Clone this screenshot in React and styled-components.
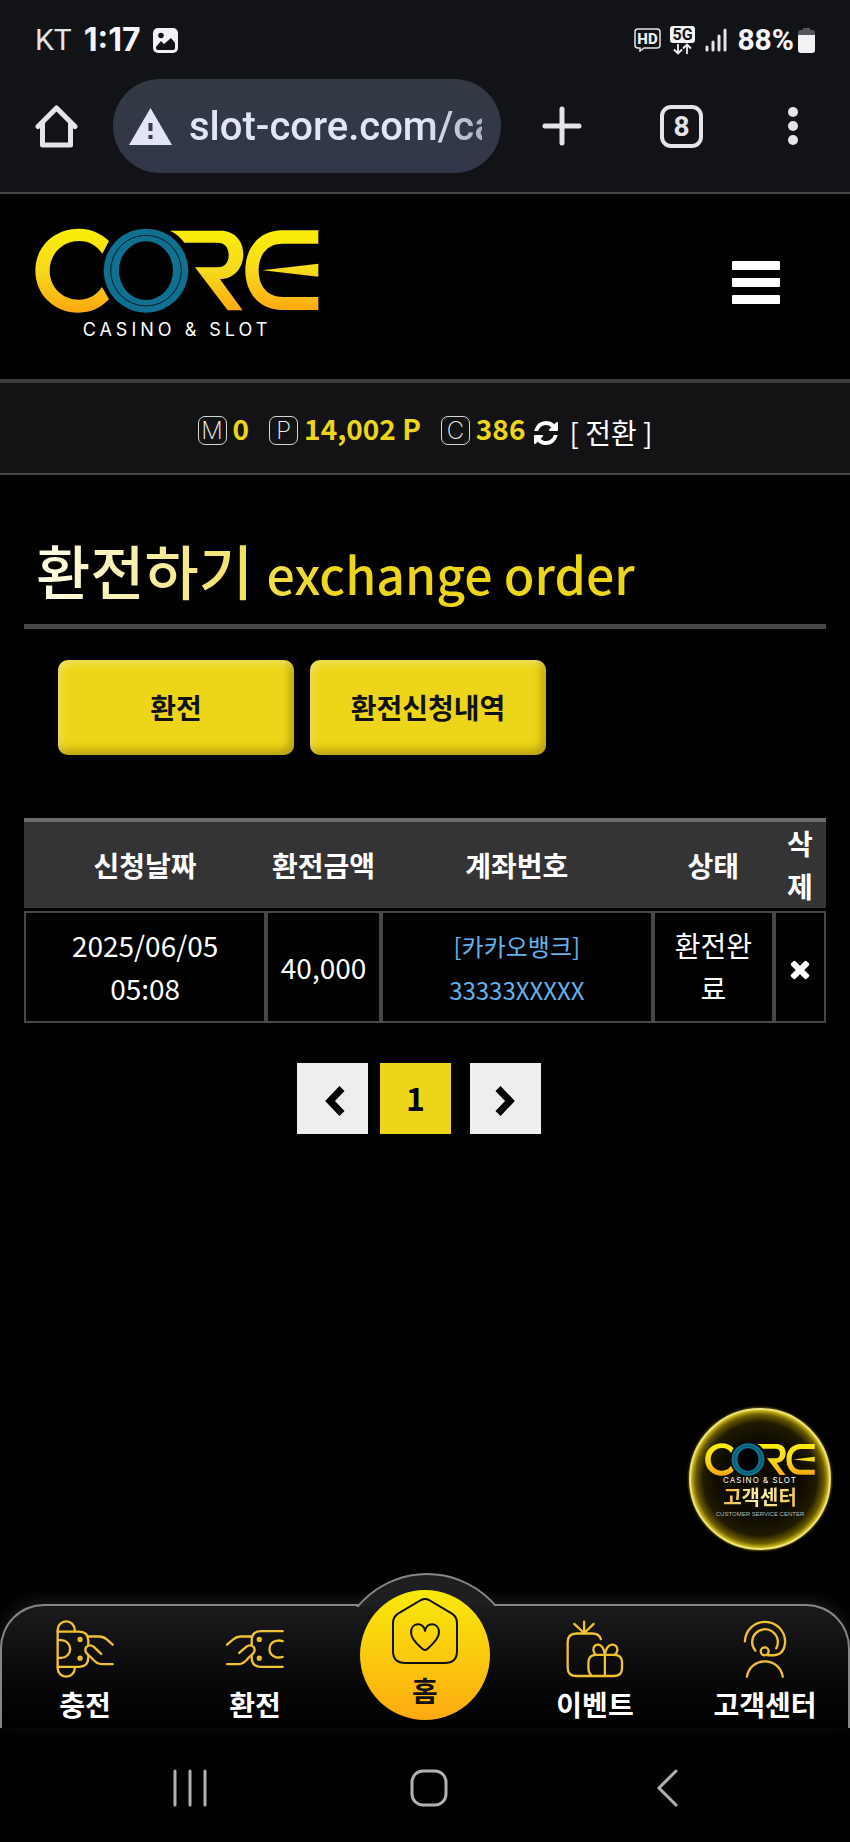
import React from "react";
import styled, {createGlobalStyle} from "styled-components";

const colors = {
    yellow: '#edd619',
    line: '#474747',
    chrome: '#111317',
    icon: '#e4e4e9',
    system: '#b5b0b3',
}

const GlobalStyle = createGlobalStyle`
  * {
    box-sizing: border-box;
  }

  body {
    margin: 0;
    background: #010102;
    color: #fff;
    font-family: "Noto Sans CJK KR", "Noto Sans", sans-serif;
    font-size: 28px;
    line-height: 43px;
  }

  button, input {
    font: inherit;
    border: 0;
    padding: 0;
    margin: 0;
    background: none;
    color: inherit;
  }

  button {
    cursor: pointer;
  }

  a {
    color: inherit;
    text-decoration: none;
  }

  svg {
    display: block;
    flex: none;
  }
`;

const Page = styled.div`
  display: flex;
  flex-direction: column;
  min-height: 100vh;
`;

/* phone status bar and browser bar */

const Chrome = styled.div`
  background: ${colors.chrome};
  border-bottom: 2px solid ${colors.line};
  color: ${colors.icon};
  font-family: Roboto, "Noto Sans", sans-serif;
`;

const StatusBar = styled.div`
  display: flex;
  justify-content: space-between;
  padding: 19px 35px 0 35px;
  height: 79px;
  line-height: 42px;
`;

const StatusGroup = styled.div`
  display: flex;
  align-items: center;
  gap: ${props => props.$gap}px;
  height: 42px;
`;

const Carrier = styled.span`
  font-size: 30px;
  font-weight: 400;
`;

const Clock = styled.span`
  font-family: Inter, sans-serif;
  font-size: 32px;
  font-weight: 700;
  color: #f5f5f8;
`;

const Battery = styled.span`
  display: flex;
  align-items: center;
  gap: 4px;
  font-size: 30px;
  font-weight: 700;
  color: #f5f5f8;
`;

const BrowserBar = styled.div`
  display: flex;
  align-items: center;
  height: 113px;
  padding: 0 45px 19px 35px;
`;

const AddressBar = styled.label`
  display: flex;
  align-items: center;
  flex: 1;
  min-width: 0;
  height: 94px;
  margin-left: 35px;
  padding: 0 19px 0 16px;
  gap: 17px;
  border-radius: 47px;
  background: linear-gradient(#333a43, #32364a);
`;

const Address = styled.input`
  flex: 1;
  min-width: 0;
  height: 60px;
  outline: none;
  font-size: 40px;
  font-weight: 500;
  color: #e2e5f5;
  -webkit-mask-image: linear-gradient(90deg, #000 80%, rgba(0, 0, 0, 0.7));
  mask-image: linear-gradient(90deg, #000 80%, rgba(0, 0, 0, 0.7));
`;

const BrowserActions = styled.div`
  display: flex;
  justify-content: space-between;
  width: 263px;
  margin-left: 41px;
`;

const TabCount = styled.button`
  width: 43px;
  height: 43px;
  border: 4px solid ${colors.icon};
  border-radius: 11px;
  font-size: 28px;
  font-weight: 700;
  line-height: 35px;
`;

const IconButton = styled.button`
  display: flex;
  align-items: center;
  justify-content: center;
`;

/* site header */

const Header = styled.header`
  display: flex;
  justify-content: space-between;
  align-items: center;
  height: 185px;
  padding: 0 70px 4px 35px;
`;

const Logo = styled.a`
  display: flex;
  flex-direction: column;
  align-items: center;
`;

const Tagline = styled.span`
  margin-top: ${props => props.$small ? 0 : 5}px;
  font-family: Inter, sans-serif;
  font-size: ${props => props.$small ? 8 : 18}px;
  line-height: ${props => props.$small ? 8 : 22}px;
  letter-spacing: ${props => props.$small ? 1 : 4}px;
  white-space: nowrap;
`;

const Menu = styled.button`
  display: flex;
  flex-direction: column;
  gap: 8px;
  padding-bottom: 4px;
`;

const MenuLine = styled.span`
  width: 48px;
  height: 9px;
  border-radius: 1px;
  background: #fff;
`;

const Wallet = styled.div`
  display: flex;
  justify-content: center;
  align-items: center;
  height: 96px;
  background: #131214;
  border-top: 4px solid #3d3d3f;
  border-bottom: 2px solid ${colors.line};
`;

const Balance = styled.span`
  display: flex;
  align-items: center;
  gap: 6px;
  margin-right: ${props => props.$last ? 8 : 20}px;
  font-weight: 700;
  color: ${colors.yellow};
`;

const Coin = styled.i`
  width: 29px;
  height: 29px;
  margin-top: 4px;
  border: 1px solid #d8d8d8;
  border-radius: 7px;
  font-family: Inter, sans-serif;
  font-style: normal;
  font-size: 24px;
  font-weight: 200;
  line-height: 27px;
  text-align: center;
  color: #f0f0f0;
`;

const Convert = styled.button`
  display: flex;
  align-items: center;
  gap: 10px;
  padding-top: 8px;
`;

/* page content */

const Main = styled.main`
  position: relative;
  flex: 1;
  padding: 56px 24px 0;
`;

const Title = styled.h1`
  margin: 0;
  height: 98px;
  border-bottom: 5px solid ${colors.line};
  padding-left: 12px;
  font-size: 59px;
  font-weight: 500;
  line-height: 78px;
`;

const TitleText = styled.span`
  background: linear-gradient(90deg, #fffde8, #f4e680 28%, ${colors.yellow} 50%);
  -webkit-background-clip: text;
  background-clip: text;
  color: transparent;
`;

const TitleSub = styled.span`
  font-size: 50px;
`;

const Tabs = styled.div`
  display: flex;
  gap: 16px;
  padding: 31px 34px 63px;
`;

const Tab = styled.button`
  width: 236px;
  height: 95px;
  border-radius: 10px;
  background: ${colors.yellow};
  box-shadow: inset 3px 4px 7px rgba(255, 255, 255, 0.3), inset -4px -5px 8px rgba(120, 90, 0, 0.45);
  color: #111;
  font-weight: 700;
`;

const Table = styled.table`
  width: 100%;
  table-layout: fixed;
  border-collapse: separate;
  border-spacing: 0;
  text-align: center;
`;

const Col = styled.col`
  width: ${props => props.$width};
`;

const HeadCell = styled.th`
  height: 92px;
  padding: 0 4px;
  border-top: 4px solid #6a6a6a;
  border-bottom: 3px solid #000;
  background: #343335;
  background-clip: padding-box;
  font-weight: 700;
  word-break: break-all;
`;

const Cell = styled.td`
  height: 112px;
  padding: 0 10px;
  border: 2px solid ${colors.line};
  word-break: break-all;
`;

const DateText = styled.span`
  word-break: normal;
`;

const Account = styled.a`
  font-size: 24px;
  color: #64b2ec;
`;

const Pages = styled.nav`
  display: flex;
  justify-content: center;
  padding: 40px 0 0;
  margin-right: 12px;
`;

const PageButton = styled.button`
  display: flex;
  align-items: center;
  justify-content: center;
  width: 71px;
  height: 71px;
  margin-right: ${props => props.$current ? 19 : 12}px;
  padding-bottom: ${props => props.$current ? 2 : 0}px;
  background: ${props => props.$current ? colors.yellow : '#eeeef0'};
  color: #000;
  font-size: 32px;
  font-weight: 700;

  &:last-child {
    margin-right: 0;
  }
`;

const Support = styled.a`
  position: absolute;
  right: 19px;
  bottom: 54px;
  display: flex;
  flex-direction: column;
  align-items: center;
  width: 142px;
  height: 142px;
  padding-top: 33px;
  border: 2px solid #eee27a;
  border-radius: 50%;
  background: radial-gradient(circle, #0d0a00 40%, #1f1a00 58%, #6b5c00 66%, #d9c51f 71%);
  box-shadow: 0 0 3px #b9a71c;
`;

const SupportName = styled.strong`
  font-size: 20px;
  font-weight: 700;
  line-height: 26px;
  background: linear-gradient(110deg, #ecae35, #fff3b0 50%, #ecc235);
  -webkit-background-clip: text;
  background-clip: text;
  color: transparent;
`;

const SupportNote = styled.small`
  font-family: "Liberation Sans", sans-serif;
  font-size: 6px;
  line-height: 8px;
  color: #b9b7ae;
`;

/* bottom bar */

const BottomBar = styled.nav`
  position: relative;
  display: grid;
  grid-template-columns: repeat(5, 1fr);
  height: 124px;
  border-radius: 44px 44px 0 0;
  background: linear-gradient(#1b1a1c, #050405 75%, #010102);
  box-shadow: 0 -4px 16px rgba(255, 255, 255, 0.1);
  font-weight: 700;

  &::before {
    content: "";
    position: absolute;
    inset: 0;
    border: 2px solid #868686;
    border-bottom: 0;
    border-radius: 44px 44px 0 0;
    pointer-events: none;
  }
`;

const Bump = styled.div`
  position: absolute;
  left: 50%;
  top: -31px;
  width: 140px;
  height: 34px;
  margin-left: -70px;
  overflow: hidden;

  &::before {
    content: "";
    position: absolute;
    left: -19px;
    top: 0;
    width: 178px;
    height: 178px;
    border: 2px solid #868686;
    border-radius: 50%;
    background: #1f1e20;
  }
`;

const BottomLink = styled.a`
  display: flex;
  flex-direction: column;
  align-items: center;
  gap: 5px;
  padding-top: 16px;
  color: #fff;
`;

const HomeLink = styled.a`
  position: relative;
  justify-self: center;
  display: flex;
  flex-direction: column;
  align-items: center;
  gap: 5px;
  width: 130px;
  height: 130px;
  margin-top: -14px;
  padding-top: 8px;
  border-radius: 50%;
  background: linear-gradient(#f7ea0b, #fdaa10);
  color: #111;
`;

const SystemBar = styled.div`
  display: flex;
  justify-content: space-between;
  align-items: center;
  height: 114px;
  padding: 6px 164px 0 171px;
`;

function CoreMark({width, id}) {
    return (
        <svg width={width} viewBox="105 88 852 256" aria-label="CORE">
            <defs>
                <linearGradient id={id} x1="0" y1="90" x2="0" y2="342" gradientUnits="userSpaceOnUse">
                    <stop offset="0" stopColor="#fbee08"/>
                    <stop offset="0.5" stopColor="#f6da1c"/>
                    <stop offset="1" stopColor="#ffa70f"/>
                </linearGradient>
            </defs>
            <g fill={`url(#${id})`}>
                <path d="M327 127C302 103 272 90 236 90C162 90 106 145 106 216C106 287 162 342 236 342C272 342 302 328 327 302L306 265C289 290 265 303 238 303C188 303 149 266 149 216C149 165 188 127 238 127C266 127 290 140 307 165Z"/>
                <path d="M510 96H662C702 96 730 125 730 166C730 207 704 240 660 242L728 335H683L585 206H652C674 206 686 192 686 169C686 146 674 132 652 132H553C543 117 528 104 510 96Z"/>
                <path d="M955 95H846C780 95 736 145 736 215C736 285 780 334 846 334H955V295H848C803 295 776 263 776 215C776 167 803 135 848 135H955Z"/>
                <path d="M787 215L955 195V234Z"/>
            </g>
            <ellipse cx="438" cy="216" rx="127" ry="126" fill="#0f708f"/>
            <ellipse cx="438" cy="216" rx="106" ry="106" fill="none" stroke="#061a22" strokeWidth="3"/>
            <ellipse cx="438" cy="216" rx="81" ry="88" fill="#010102"/>
        </svg>
    );
}

function Chevron({flip}) {
    return (
        <svg width="24" height="34" viewBox="0 0 24 34" fill="none" stroke="#000" strokeWidth="7">
            <path d={flip ? "M4 6.500L16 19L4 31.500" : "M21 6.500L9 19L21 31.500"}/>
        </svg>
    );
}

const bottomIcons = {
    deposit: {
        box: "168 182 176 176",
        shapes: <>
            <path d="M225 214V212A26 26 0 0 0 173 212V328A26 26 0 0 0 225 328V326"/>
            <path d="M173 217H238Q266 217 266 245V258M266 292V296Q266 324 238 324H173M175 243H184A27 27 0 0 1 184 297H175"/>
            <path d="M264 232H298Q312 232 322 241L340 257M305 285L282 263C271 254 257 261 257 273C257 286 270 289 276 297Q290 316 308 316H340"/>
            <circle cx="241" cy="241" r="4.500"/>
            <circle cx="241" cy="298" r="4.500"/>
        </>,
    },
    withdraw: {
        box: "678 182 176 176",
        shapes: <>
            <path d="M850 216H784Q756 216 756 244V258M756 292V296Q756 324 784 324H850M850 246C830 240 810 250 810 270S830 300 850 294"/>
            <path d="M756 232H722Q710 232 700 241L681 257M718 282L740 263C751 254 765 261 765 273C765 286 752 289 746 297Q732 316 716 316H681"/>
            <circle cx="779" cy="241" r="4.500"/>
            <circle cx="779" cy="298" r="4.500"/>
        </>,
    },
    event: {
        box: "48 182 176 176",
        shapes: <>
            <path d="M154 240Q148 223 128 223H80Q53 223 53 250V325Q53 352 80 352H195Q218 352 218 328V312Q218 288 195 288H139Q116 288 116 312V328Q116 345 128 352M166 288V352"/>
            <path d="M166 288C160 246 130 252 131 273Q132 283 139 288M166 288C172 246 205 252 204 273Q203 283 196 288"/>
            <path d="M103 222V187M101 220L73 194M105 220L132 194"/>
        </>,
    },
    support: {
        box: "558 182 176 176",
        shapes: <>
            <path d="M585 247A61 61 0 1 1 707 250Q704 289 670 289H654M617 275A39 39 0 1 1 680 268"/>
            <circle cx="645" cy="277" r="12"/>
            <path d="M591 354C603 292 688 292 700 354"/>
        </>,
    },
};

function BottomIcon({name}) {
    const icon = bottomIcons[name];
    return (
        <svg width="58" height="58" viewBox={icon.box} fill="none" stroke="#f0c233" strokeWidth="7"
             strokeLinecap="round" strokeLinejoin="round">
            {icon.shapes}
        </svg>
    );
}

function PhoneStatus() {
    return (
        <StatusBar>
            <StatusGroup $gap={12}>
                <Carrier>KT</Carrier>
                <Clock>1:17</Clock>
                <svg width="25" height="25" viewBox="0 0 25 25">
                    <rect width="25" height="25" rx="5" fill="#f2f2f5"/>
                    <path d="M3 19L8 13L11 16L18 10L22 15V20Q22 22 20 22H5Q3 22 3 20Z" fill={colors.chrome}/>
                    <circle cx="8" cy="7.500" r="2.800" fill={colors.chrome}/>
                </svg>
            </StatusGroup>
            <StatusGroup $gap={9}>
                <svg width="27" height="24" viewBox="0 0 27 24">
                    <path d="M4 1H23Q26 1 26 4V17Q26 20 23 20H10L6 23V20H4Q1 20 1 17V4Q1 1 4 1Z" fill="none"
                          stroke="#e4e4e9" strokeWidth="1.500"/>
                    <text x="13.500" y="16" textAnchor="middle" fontSize="15" fontWeight="800" fill="#f2f2f5">HD</text>
                </svg>
                <svg width="25" height="29" viewBox="0 0 25 29">
                    <rect width="25" height="17" rx="3" fill="#f2f2f5"/>
                    <text x="12.500" y="14" textAnchor="middle" fontSize="16" fontWeight="700" fill={colors.chrome}>5G</text>
                    <path d="M8 18V27M4 23.500L8 27.500L12 23.500M17 28V19M13 22.500L17 18.500L21 22.500" fill="none"
                          stroke="#f2f2f5" strokeWidth="1.800"/>
                </svg>
                <svg width="24" height="24" viewBox="0 0 24 24" fill="none" stroke="#e4e4e9" strokeWidth="3"
                     strokeLinecap="round">
                    <path d="M3 19V22M9 14V22M15 8V22M21 2V22"/>
                </svg>
                <Battery>
                    88%
                    <svg width="17" height="25" viewBox="0 0 17 25">
                        <path d="M5 0H12V2H14Q17 2 17 5V7H0V5Q0 2 3 2H5Z" fill="#55565a"/>
                        <path d="M0 7H17V22Q17 25 14 25H3Q0 25 0 22Z" fill="#f2f2f5"/>
                    </svg>
                </Battery>
            </StatusGroup>
        </StatusBar>
    );
}

function Browser() {
    return (
        <BrowserBar>
            <IconButton aria-label="Home">
                <svg width="43" height="43" viewBox="0 0 43 43" fill="none" stroke={colors.icon} strokeWidth="5"
                     strokeLinecap="round" strokeLinejoin="round">
                    <path d="M3 21.500L21.500 3L40 21.500M7.500 19V40H35.500V19"/>
                </svg>
            </IconButton>
            <AddressBar>
                <svg width="43" height="37" viewBox="0 0 43 37">
                    <path d="M21.500 0L43 37H0Z" fill="#e2e5f5"/>
                    <path d="M19.500 15H23.500V23H19.500ZM19.500 27H23.500V31H19.500Z" fill="#333a43"/>
                </svg>
                <Address aria-label="Address" defaultValue="slot-core.com/ca" readOnly/>
            </AddressBar>
            <BrowserActions>
                <IconButton aria-label="New tab">
                    <svg width="40" height="40" viewBox="0 0 40 40" stroke={colors.icon} strokeWidth="5"
                         strokeLinecap="round">
                        <path d="M20 3V37M3 20H37"/>
                    </svg>
                </IconButton>
                <TabCount>8</TabCount>
                <IconButton aria-label="More">
                    <svg width="24" height="40" viewBox="0 0 24 40" fill={colors.icon}>
                        <circle cx="12" cy="6" r="5"/>
                        <circle cx="12" cy="20" r="5"/>
                        <circle cx="12" cy="34" r="5"/>
                    </svg>
                </IconButton>
            </BrowserActions>
        </BrowserBar>
    );
}

function ExchangeTable() {
    return (
        <Table>
            <colgroup>
                <Col $width="30.2%"/>
                <Col $width="14.3%"/>
                <Col $width="33.9%"/>
                <Col $width="15.1%"/>
                <Col $width="6.5%"/>
            </colgroup>
            <thead>
            <tr>
                <HeadCell>신청날짜</HeadCell>
                <HeadCell>환전금액</HeadCell>
                <HeadCell>계좌번호</HeadCell>
                <HeadCell>상태</HeadCell>
                <HeadCell>삭제</HeadCell>
            </tr>
            </thead>
            <tbody>
            <tr>
                <Cell><DateText>2025/06/05<br/>05:08</DateText></Cell>
                <Cell>40,000</Cell>
                <Cell><Account href="#account">[카카오뱅크]<br/>33333XXXXX</Account></Cell>
                <Cell>환전완료</Cell>
                <Cell>
                    <IconButton aria-label="삭제">
                        <svg width="28" height="32" viewBox="0 -256 1792 2048" fill="#fff">
                            <path d="M1490 1322q0 40-28 68l-136 136q-28 28-68 28t-68-28l-294-294-294 294q-28 28-68 28t-68-28l-136-136q-28-28-28-68t28-68l294-294-294-294q-28-28-28-68t28-68l136-136q28-28 68-28t68 28l294 294 294-294q28-28 68-28t68 28l136 136q28 28 28 68t-28 68l-294 294 294 294q28 28 28 68z"/>
                        </svg>
                    </IconButton>
                </Cell>
            </tr>
            </tbody>
        </Table>
    );
}

function App() {
    return (
        <Page>
            <GlobalStyle/>
            <Chrome>
                <PhoneStatus/>
                <Browser/>
            </Chrome>
            <Header>
                <Logo href="#home">
                    <CoreMark width={284} id="core-header"/>
                    <Tagline>CASINO &amp; SLOT</Tagline>
                </Logo>
                <Menu aria-label="메뉴">
                    <MenuLine/>
                    <MenuLine/>
                    <MenuLine/>
                </Menu>
            </Header>
            <Wallet>
                <Balance><Coin>M</Coin>0</Balance>
                <Balance><Coin>P</Coin>14,002 P</Balance>
                <Balance $last><Coin>C</Coin>386</Balance>
                <Convert>
                    <svg width="26" height="26" viewBox="64 0 1664 1664" fill="#fff">
                        <path d="M1639 1056q0 5-1 7-64 268-268 434.500t-478 166.500q-146 0-282.500-55t-243.500-157l-129 129q-19 19-45 19t-45-19-19-45v-448q0-26 19-45t45-19h448q26 0 45 19t19 45-19 45l-137 137q71 66 161 102t187 36q134 0 250-65t186-179q11-17 53-117 8-23 30-23h192q13 0 22.500 9.500t9.500 22.500zm25-800v448q0 26-19 45t-45 19h-448q-26 0-45-19t-19-45 19-45l138-138q-148-137-349-137-134 0-250 65t-186 179q-11 17-53 117-8 23-30 23h-199q-13 0-22.500-9.500t-9.500-22.500v-7q65-268 270-434.500t480-166.500q146 0 284 55.500t245 156.500l130-129q19-19 45-19t45 19 19 45z"/>
                    </svg>
                    [ 전환 ]
                </Convert>
            </Wallet>
            <Main>
                <Title>
                    <TitleText>환전하기 <TitleSub>exchange order</TitleSub></TitleText>
                </Title>
                <Tabs>
                    <Tab>환전</Tab>
                    <Tab>환전신청내역</Tab>
                </Tabs>
                <ExchangeTable/>
                <Pages>
                    <PageButton aria-label="이전"><Chevron/></PageButton>
                    <PageButton $current>1</PageButton>
                    <PageButton aria-label="다음"><Chevron flip/></PageButton>
                </Pages>
                <Support href="#support">
                    <CoreMark width={110} id="core-support"/>
                    <Tagline $small>CASINO &amp; SLOT</Tagline>
                    <SupportName>고객센터</SupportName>
                    <SupportNote>CUSTOMER SERVICE CENTER</SupportNote>
                </Support>
            </Main>
            <BottomBar>
                <Bump/>
                <BottomLink href="#deposit"><BottomIcon name="deposit"/>충전</BottomLink>
                <BottomLink href="#withdraw"><BottomIcon name="withdraw"/>환전</BottomLink>
                <HomeLink href="#home">
                    <svg width="66" height="66" viewBox="276 113 198 198" fill="none" stroke="#111" strokeWidth="6"
                         strokeLinecap="round" strokeLinejoin="round">
                        <path d="M363 119Q375 113 387 119L456 160Q471 170 471 188V272Q471 308 434 308H316Q279 308 279 272V188Q279 170 294 160Z"/>
                        <path d="M375 212C372 184 333 184 333 216C333 239 356 256 368 266Q375 272 382 266C394 255 417 237 417 216C417 184 378 184 375 212Z"/>
                    </svg>
                    홈
                </HomeLink>
                <BottomLink href="#event"><BottomIcon name="event"/>이벤트</BottomLink>
                <BottomLink href="#support"><BottomIcon name="support"/>고객센터</BottomLink>
            </BottomBar>
            <SystemBar>
                <IconButton aria-label="Recents">
                    <svg width="38" height="38" viewBox="0 0 38 38" stroke={colors.system} strokeWidth="3"
                         strokeLinecap="round">
                        <path d="M4 2V36M19 2V36M34 2V36"/>
                    </svg>
                </IconButton>
                <IconButton aria-label="Home">
                    <svg width="38" height="38" viewBox="0 0 38 38" fill="none" stroke={colors.system} strokeWidth="3">
                        <rect x="2" y="2" width="34" height="34" rx="11"/>
                    </svg>
                </IconButton>
                <IconButton aria-label="Back">
                    <svg width="38" height="38" viewBox="0 0 38 38" fill="none" stroke={colors.system} strokeWidth="3"
                         strokeLinecap="round">
                        <path d="M28 2L11 19L28 36"/>
                    </svg>
                </IconButton>
            </SystemBar>
        </Page>
    );
}

export default App;
